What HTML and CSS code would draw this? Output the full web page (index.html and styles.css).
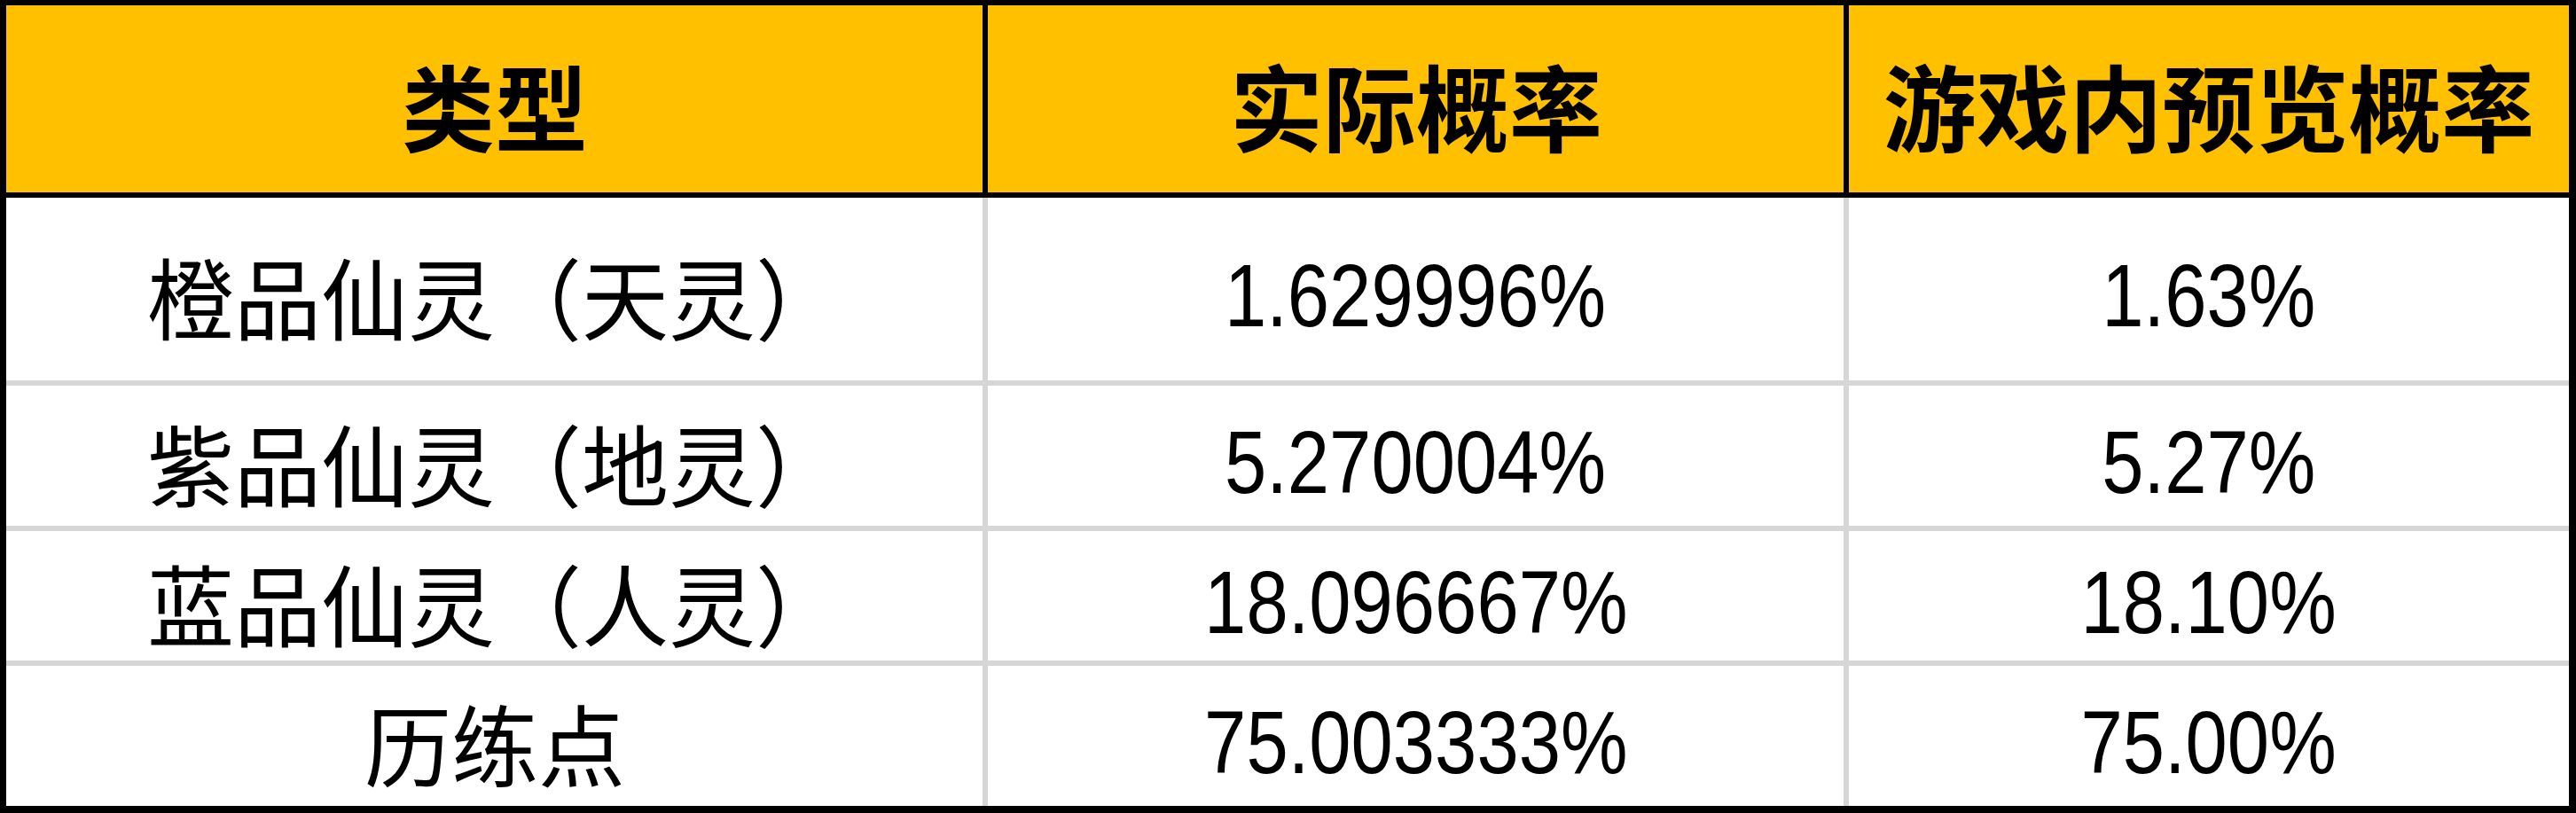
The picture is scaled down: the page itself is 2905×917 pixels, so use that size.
FILE: index.html
```html
<!DOCTYPE html>
<html lang="zh-CN">
<head>
<meta charset="utf-8">
<title>概率表</title>
<link rel="stylesheet" href="styles.css">
</head>
<body>
<div class="sheet">
  <div class="head">
    <div class="hcell"><span class="ht">类型</span></div>
    <div class="hcell"><span class="ht">实际概率</span></div>
    <div class="hcell"><span class="ht">游戏内预览概率</span></div>
  </div>
  <div class="body">
    <div class="cell r1"><span class="cn">橙品仙灵（天灵）</span></div>
    <div class="cell r1"><span class="num">1.629996%</span></div>
    <div class="cell r1"><span class="num">1.63%</span></div>

    <div class="cell r2"><span class="cn">紫品仙灵（地灵）</span></div>
    <div class="cell r2"><span class="num">5.270004%</span></div>
    <div class="cell r2"><span class="num">5.27%</span></div>

    <div class="cell r3"><span class="cn">蓝品仙灵（人灵）</span></div>
    <div class="cell r3"><span class="num">18.096667%</span></div>
    <div class="cell r3"><span class="num">18.10%</span></div>

    <div class="cell r4"><span class="cn">历练点</span></div>
    <div class="cell r4"><span class="num">75.003333%</span></div>
    <div class="cell r4"><span class="num">75.00%</span></div>
  </div>
</div>
</body>
</html>
```

FILE: styles.css
```css
html, body {
  margin: 0;
  padding: 0;
  background: #ffffff;
}

.sheet {
  width: 2905px;
  height: 917px;
  box-sizing: border-box;
  border-style: solid;
  border-color: #000000;
  border-width: 6px 8px 8px 7px;
  background: #000000;
  display: flex;
  flex-direction: column;
}

.head {
  display: grid;
  grid-template-columns: 1101px 965px 812px;
  column-gap: 6px;
  height: 211px;
  background: #000000;
  border-bottom: 6px solid #000000;
}

.hcell {
  background: #ffc000;
  display: flex;
  align-items: center;
  justify-content: center;
  padding-top: 10px;
  box-sizing: border-box;
}

.ht {
  font-family: "Noto Sans CJK SC", sans-serif;
  font-weight: 700;
  font-size: 106px;
  line-height: 1;
  color: #000000;
  display: inline-block;
  transform: scaleX(0.99);
  white-space: nowrap;
}

.body {
  display: grid;
  grid-template-columns: 1101px 965px 812px;
  grid-template-rows: 206px 158px 146px 158px;
  gap: 6px;
  background: #d6d6d6;
  flex: 1;
}

.cell {
  background: #ffffff;
  display: flex;
  align-items: center;
  justify-content: center;
  padding-top: 14px;
  box-sizing: border-box;
}

.cn {
  font-family: "Noto Sans CJK SC", sans-serif;
  font-weight: 400;
  font-size: 100px;
  line-height: 1;
  color: #000000;
  display: inline-block;
  transform: scaleX(0.98);
  white-space: nowrap;
}

.num {
  font-family: "Liberation Sans", Arial, sans-serif;
  font-weight: 400;
  font-size: 100px;
  line-height: 1;
  color: #000000;
  display: inline-block;
  transform: scaleX(0.85);
  white-space: nowrap;
}
```
